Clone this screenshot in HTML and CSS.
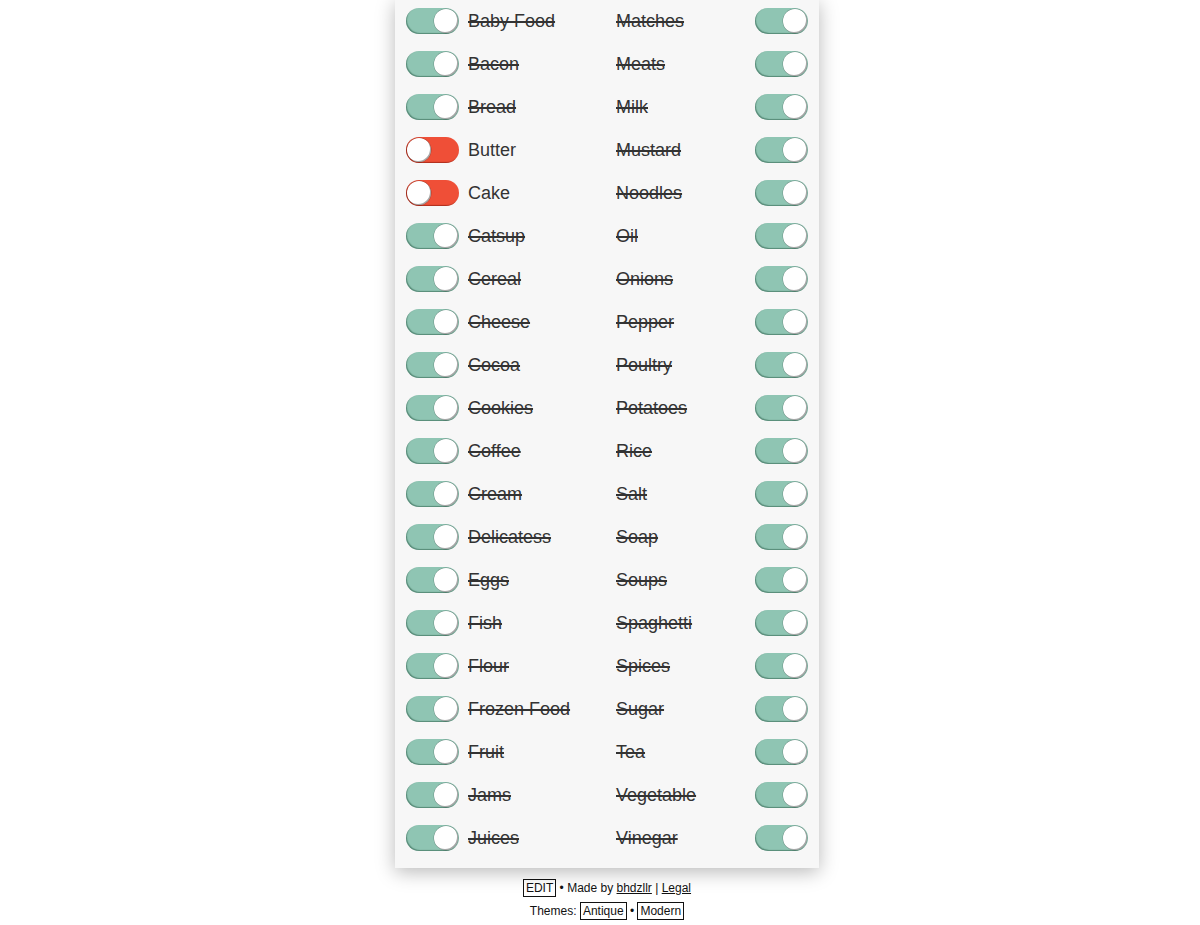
FILE: index.html
```html
<!DOCTYPE html>
<html>
<head>
<meta charset="utf-8">
<link rel="stylesheet" href="styles.css">
</head>
<body>
<div class="page">
  <div class="card">
    <div class="col left">
      <div class="row"><span class="tog on"></span><span class="lbl done">Baby Food</span></div>
      <div class="row"><span class="tog on"></span><span class="lbl done">Bacon</span></div>
      <div class="row"><span class="tog on"></span><span class="lbl done">Bread</span></div>
      <div class="row"><span class="tog off"></span><span class="lbl">Butter</span></div>
      <div class="row"><span class="tog off"></span><span class="lbl">Cake</span></div>
      <div class="row"><span class="tog on"></span><span class="lbl done">Catsup</span></div>
      <div class="row"><span class="tog on"></span><span class="lbl done">Cereal</span></div>
      <div class="row"><span class="tog on"></span><span class="lbl done">Cheese</span></div>
      <div class="row"><span class="tog on"></span><span class="lbl done">Cocoa</span></div>
      <div class="row"><span class="tog on"></span><span class="lbl done">Cookies</span></div>
      <div class="row"><span class="tog on"></span><span class="lbl done">Coffee</span></div>
      <div class="row"><span class="tog on"></span><span class="lbl done">Cream</span></div>
      <div class="row"><span class="tog on"></span><span class="lbl done">Delicatess</span></div>
      <div class="row"><span class="tog on"></span><span class="lbl done">Eggs</span></div>
      <div class="row"><span class="tog on"></span><span class="lbl done">Fish</span></div>
      <div class="row"><span class="tog on"></span><span class="lbl done">Flour</span></div>
      <div class="row"><span class="tog on"></span><span class="lbl done">Frozen Food</span></div>
      <div class="row"><span class="tog on"></span><span class="lbl done">Fruit</span></div>
      <div class="row"><span class="tog on"></span><span class="lbl done">Jams</span></div>
      <div class="row"><span class="tog on"></span><span class="lbl done">Juices</span></div>
    </div>
    <div class="col right">
      <div class="row"><span class="lbl done">Matches</span><span class="tog on"></span></div>
      <div class="row"><span class="lbl done">Meats</span><span class="tog on"></span></div>
      <div class="row"><span class="lbl done">Milk</span><span class="tog on"></span></div>
      <div class="row"><span class="lbl done">Mustard</span><span class="tog on"></span></div>
      <div class="row"><span class="lbl done">Noodles</span><span class="tog on"></span></div>
      <div class="row"><span class="lbl done">Oil</span><span class="tog on"></span></div>
      <div class="row"><span class="lbl done">Onions</span><span class="tog on"></span></div>
      <div class="row"><span class="lbl done">Pepper</span><span class="tog on"></span></div>
      <div class="row"><span class="lbl done">Poultry</span><span class="tog on"></span></div>
      <div class="row"><span class="lbl done">Potatoes</span><span class="tog on"></span></div>
      <div class="row"><span class="lbl done">Rice</span><span class="tog on"></span></div>
      <div class="row"><span class="lbl done">Salt</span><span class="tog on"></span></div>
      <div class="row"><span class="lbl done">Soap</span><span class="tog on"></span></div>
      <div class="row"><span class="lbl done">Soups</span><span class="tog on"></span></div>
      <div class="row"><span class="lbl done">Spaghetti</span><span class="tog on"></span></div>
      <div class="row"><span class="lbl done">Spices</span><span class="tog on"></span></div>
      <div class="row"><span class="lbl done">Sugar</span><span class="tog on"></span></div>
      <div class="row"><span class="lbl done">Tea</span><span class="tog on"></span></div>
      <div class="row"><span class="lbl done">Vegetable</span><span class="tog on"></span></div>
      <div class="row"><span class="lbl done">Vinegar</span><span class="tog on"></span></div>
    </div>
  </div>
  <div class="footer">
    <div class="fline"><span class="box">EDIT</span> • Made by <a href="#">bhdzllr</a> | <a href="#">Legal</a></div>
    <div class="fline">Themes: <span class="box">Antique</span> • <span class="box">Modern</span></div>
  </div>
</div>
</body>
</html>
```

FILE: styles.css
```css
html, body {
  margin: 0;
  padding: 0;
  background: #ffffff;
}
body {
  font-family: "Liberation Sans", Arial, sans-serif;
  color: #333333;
  overflow: hidden;
}
.page {
  width: 424px;
  margin: 0 auto;
  position: relative;
  left: 7px;
}
.card {
  background: #f7f7f7;
  box-shadow: 0 4px 18px rgba(0, 0, 0, 0.28);
  display: grid;
  grid-template-columns: 1fr 1fr;
  margin-top: -1px;
  padding: 0 0 9px 0;
}
.col {
  display: flex;
  flex-direction: column;
}
.row {
  height: 43px;
  display: flex;
  align-items: center;
}
.col.left .row {
  padding-left: 11px;
}
.col.right .row {
  padding-left: 9px;
  padding-right: 11px;
  justify-content: space-between;
}
.lbl {
  font-size: 18px;
  color: #333;
  line-height: 20px;
}
.col.left .lbl {
  margin-left: 9px;
}
.lbl.done {
  text-decoration: line-through;
  text-decoration-thickness: 1.5px;
}
.tog {
  width: 53px;
  height: 26px;
  border-radius: 13px;
  position: relative;
  flex: none;
  box-sizing: border-box;
}
.tog.on {
  background: #8fc5b3;
  box-shadow: inset 1px -1px 1px rgba(40, 90, 70, 0.55);
}
.tog.off {
  background: #ef4f37;
  box-shadow: inset 1px -1px 1px rgba(120, 20, 10, 0.55);
}
.tog::after {
  content: "";
  position: absolute;
  top: 1px;
  width: 24px;
  height: 24px;
  border-radius: 50%;
  background: #ffffff;
  box-sizing: border-box;
  box-shadow: inset -1px -1px 0 rgba(0, 0, 0, 0.35), 0 0 0 0.5px rgba(0, 0, 0, 0.25);
}
.tog.on::after {
  right: 1px;
}
.tog.off::after {
  left: 1px;
}
.footer {
  padding-top: 11px;
  text-align: center;
  font-size: 12px;
  color: #111;
}
.fline {
  height: 23px;
  line-height: 18px;
}
.box {
  display: inline-block;
  border: 1px solid #111;
  padding: 0 2px;
  line-height: 16px;
}
.footer a {
  color: #111;
  text-decoration: underline;
}
```
